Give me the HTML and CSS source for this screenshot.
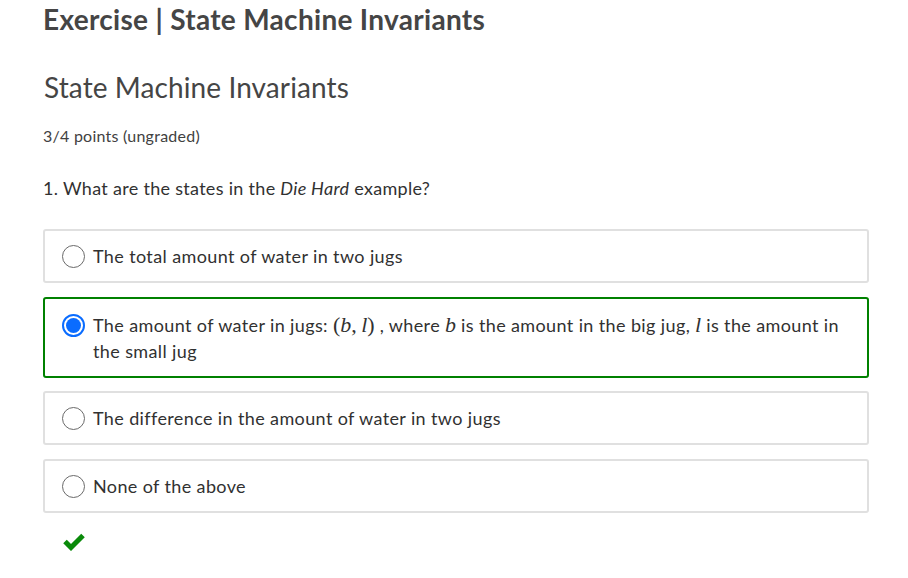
FILE: index.html
```html
<!DOCTYPE html>
<html>
<head>
<meta charset="utf-8">
<link rel="stylesheet" href="styles.css">
</head>
<body>
<div class="page">
  <h1 class="course-title">Exercise | State Machine Invariants</h1>
  <h2 class="problem-title">State Machine Invariants</h2>
  <div class="points">3/4 points (ungraded)</div>
  <p class="question">1. What are the states in the <em>Die Hard</em> example?</p>
  <div class="options">
    <label class="option">
      <span class="radio"></span>
      <span class="text">The total amount of water in two jugs</span>
    </label>
    <label class="option correct">
      <span class="radio checked"></span>
      <span class="text">The amount of water in jugs: <span class="math">(<i>b</i>,&#8201;<i>l</i>)</span> , where <span class="math"><i>b</i></span> is the amount in the big jug, <span class="math"><i>l</i></span> is the amount in the small jug</span>
    </label>
    <label class="option">
      <span class="radio"></span>
      <span class="text">The difference in the amount of water in two jugs</span>
    </label>
    <label class="option">
      <span class="radio"></span>
      <span class="text">None of the above</span>
    </label>
  </div>
  <div class="status">
    <svg width="22" height="20" viewBox="0 0 22 20"><path d="M2 10.5 L8 16.5 L20 4.5" fill="none" stroke="#0a8a0a" stroke-width="5" stroke-linejoin="miter"/></svg>
  </div>
</div>
</body>
</html>
```
FILE: styles.css
```css
html, body { margin: 0; padding: 0; background: #fff; }
body { font-family: Lato, "Open Sans", sans-serif; color: #313131; }
.page { padding: 0 40px 0 43px; width: 826px; }
.course-title { margin: 0; padding-top: 1px; font-size: 28px; line-height: 36px; font-weight: 700; color: #454545; letter-spacing: 0.3px; }
.problem-title { margin: 32px 0 0 1px; font-size: 28px; line-height: 36px; font-weight: 400; color: #454545; letter-spacing: 0.1px; }
.points { margin: 21px 0 0 0; font-size: 16px; line-height: 20px; color: #414141; letter-spacing: 0.25px; }
.question { margin: 30px 0 0 0; font-size: 18px; line-height: 24px; color: #313131; letter-spacing: 0.3px; }
.options { margin-top: 29px; display: flex; flex-direction: column; gap: 13.5px; }
.option { display: flex; align-items: flex-start; border: 2px solid #e0e0e0; border-radius: 3px; padding: 12px 17px 12px 17px; font-size: 18px; line-height: 26px; color: #313131; letter-spacing: 0.38px; }
.option.correct { border-color: #008100; padding-top: 13px; padding-bottom: 12px; }
.radio { flex: none; border: 1.5px solid #6a6a6a; border-radius: 50%; margin: 2px 8px 0 0; box-sizing: border-box; width: 23px; height: 23px; }
.radio.checked { border: 2px solid #0a6cff; background: #fff; position: relative; }
.radio.checked::after { content: ""; position: absolute; left: 2px; top: 2px; width: 15px; height: 15px; border-radius: 50%; background: #0a6cff; }
.text { flex: 1; }
.math { font-family: "Liberation Serif", serif; font-size: 22px; line-height: 1; letter-spacing: 0; }
.math i { font-style: italic; }
.status { margin: 18px 0 0 20px; }
```
